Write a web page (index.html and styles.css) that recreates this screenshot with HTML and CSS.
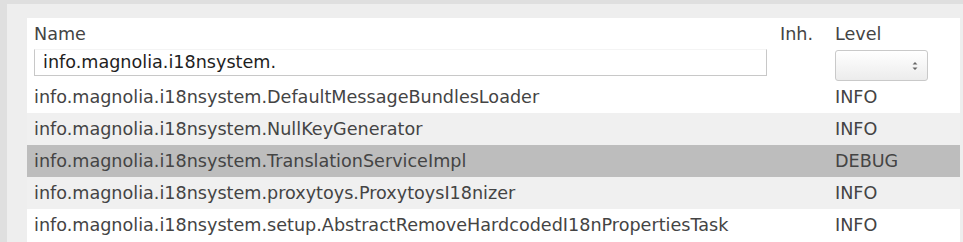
FILE: index.html
```html
<!DOCTYPE html>
<html>
<head>
<meta charset="utf-8">
<link rel="stylesheet" href="styles.css">
</head>
<body>
<div class="frame">
  <div class="panel">
    <div class="head">
      <div class="cell name">Name</div>
      <div class="cell inh">Inh.</div>
      <div class="cell level">Level</div>
    </div>
    <div class="filters">
      <div class="fcell name"><div class="input">info.magnolia.i18nsystem.</div></div>
      <div class="fcell inh"></div>
      <div class="fcell level">
        <div class="select">
          <svg class="arrows" width="6" height="10" viewBox="0 0 6 10"><path d="M0.5 3.5 L3 1 L5.5 3.5 Z M0.5 6.5 L3 9 L5.5 6.5 Z" fill="#666"/></svg>
        </div>
      </div>
    </div>
    <div class="row">
      <div class="cell name">info.magnolia.i18nsystem.DefaultMessageBundlesLoader</div>
      <div class="cell inh"></div>
      <div class="cell level">INFO</div>
    </div>
    <div class="row odd">
      <div class="cell name">info.magnolia.i18nsystem.NullKeyGenerator</div>
      <div class="cell inh"></div>
      <div class="cell level">INFO</div>
    </div>
    <div class="row selected">
      <div class="cell name">info.magnolia.i18nsystem.TranslationServiceImpl</div>
      <div class="cell inh"></div>
      <div class="cell level">DEBUG</div>
    </div>
    <div class="row odd">
      <div class="cell name">info.magnolia.i18nsystem.proxytoys.ProxytoysI18nizer</div>
      <div class="cell inh"></div>
      <div class="cell level">INFO</div>
    </div>
    <div class="row">
      <div class="cell name">info.magnolia.i18nsystem.setup.AbstractRemoveHardcodedI18nPropertiesTask</div>
      <div class="cell inh"></div>
      <div class="cell level">INFO</div>
    </div>
  </div>
</div>
</body>
</html>
```

FILE: styles.css
```css
html, body {
  margin: 0;
  padding: 0;
  background: #dfdfdf;
  height: 242px;
  overflow: hidden;
}
.frame {
  margin: 4px 0 0 7px;
  background: #eeeeee;
  padding: 14px 3px 0 20px;
  height: 224px;
}
.panel {
  background: #ffffff;
  height: 224px;
  font-family: "DejaVu Sans", sans-serif;
  font-size: 17.6px;
  color: #444444;
}
.head, .filters, .row {
  display: grid;
  grid-template-columns: 753px 55px 1fr;
}
.head {
  height: 31px;
  align-items: center;
}
.cell {
  padding-left: 7px;
  white-space: nowrap;
  line-height: 32px;
}
.head .cell { line-height: 28px; }
.head .inh, .row .inh { padding-left: 0; }
.head .level, .row .level { padding-left: 0; }
.filters {
  height: 32px;
}
.fcell.name {
  padding-left: 7px;
}
.input {
  width: 723px;
  height: 25px;
  border-left: 1px solid #c8c8c8;
  border-bottom: 1px solid #c8c8c8;
  border-right: 1px solid #c8c8c8;
  border-top: 1px solid #f4f4f4;
  padding-left: 8px;
  line-height: 24px;
  color: #1e1e1e;
  box-sizing: content-box;
}
.select {
  margin-top: 1px;
  width: 93px;
  height: 31px;
  border: 1px solid #c9c9c9;
  border-radius: 3px;
  background: linear-gradient(#ffffff, #ececec);
  display: flex;
  align-items: center;
  justify-content: flex-end;
  padding-right: 9px;
  box-sizing: border-box;
}
.arrows { display: block; }
.row {
  height: 32px;
}
.row.odd { background: #f0f0f0; }
.row.selected { background: #bdbdbd; }
```
